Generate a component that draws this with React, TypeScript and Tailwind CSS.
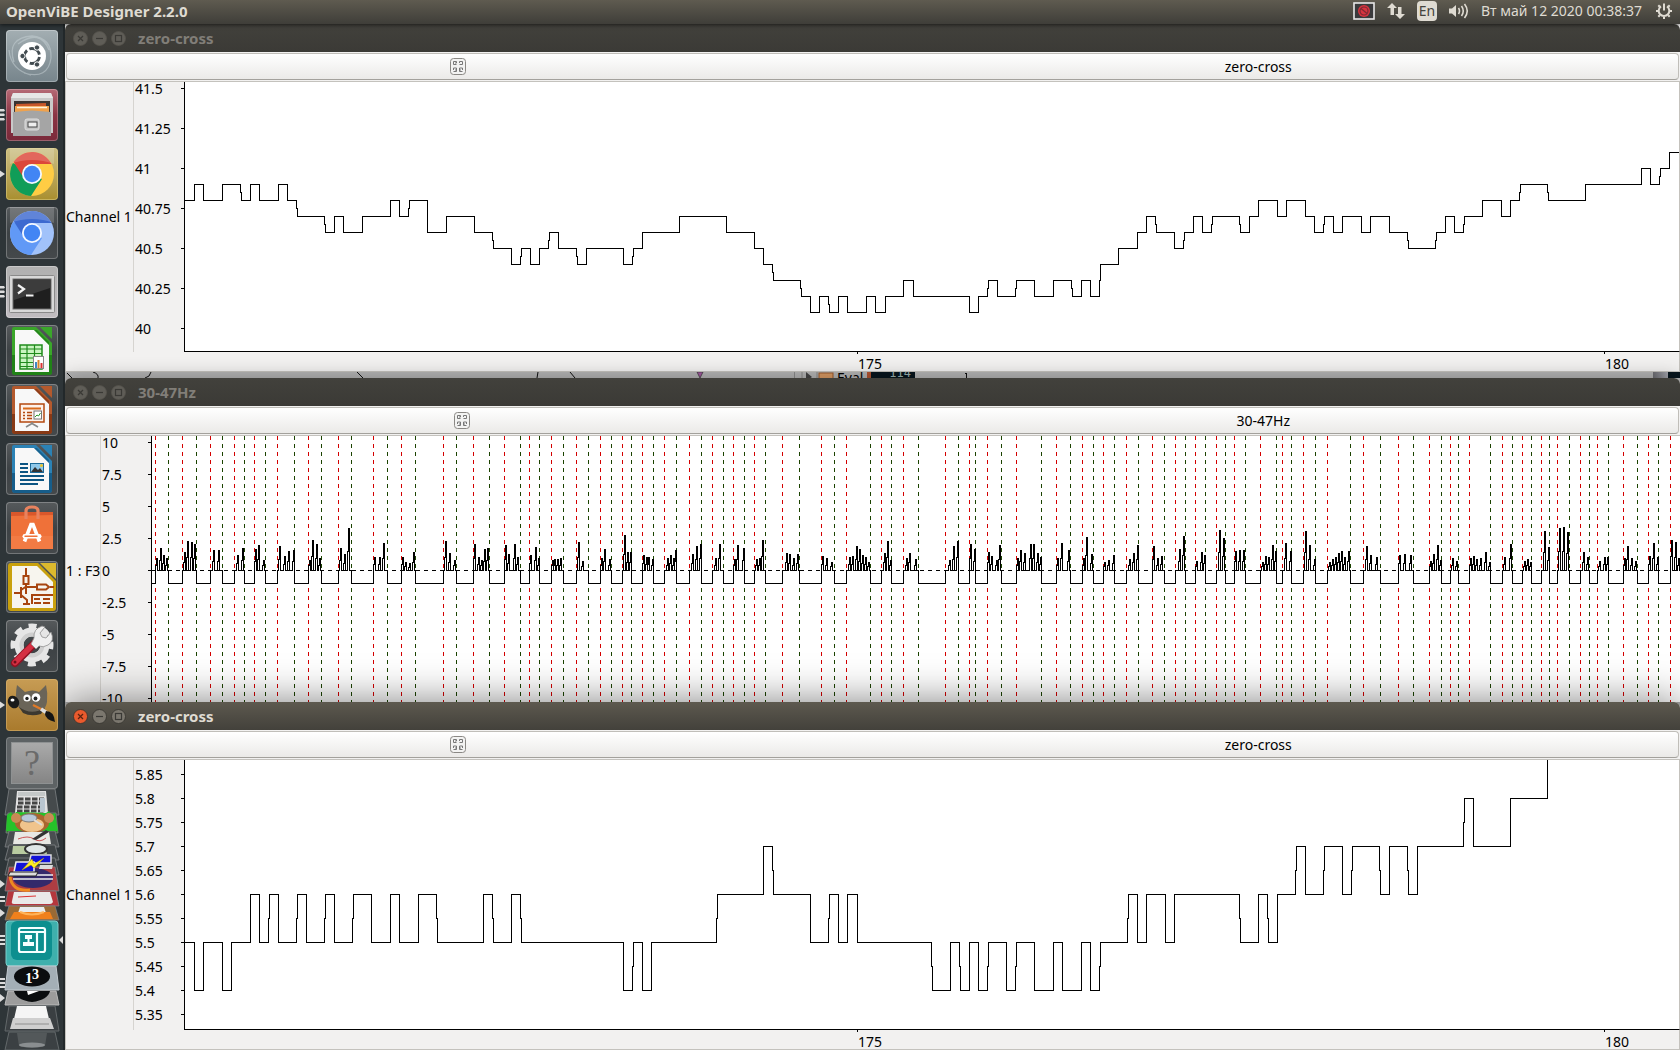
import React from "react";

type Step = [number, number];
type Burst = [number, number, number[]];

const EPOCH = 9.3375;

/* [epoch index, level in tenths] */
const UPPER: Step[] = [
  [0, 8], [1, 9], [2, 8], [4, 9], [6, 8], [7, 9], [8, 8], [10, 9], [11, 8], [12, 7], [15, 6], [16, 7], [17, 6], [19, 7],
  [22, 8], [23, 7], [24, 8], [26, 6], [28, 7], [31, 6], [33, 5], [35, 4], [36, 5], [37, 4], [38, 5], [39, 6], [40, 5],
  [42, 4], [43, 5], [47, 4], [48, 5], [49, 6], [53, 7], [58, 6], [61, 5], [62, 4], [63, 3], [66, 2], [67, 1], [68, 2],
  [69, 1], [70, 2], [71, 1], [73, 2], [74, 1], [75, 2], [77, 3], [78, 2], [84, 1], [85, 2], [86, 3], [87, 2], [89, 3],
  [91, 2], [93, 3], [95, 2], [96, 3], [97, 2], [98, 4], [100, 5], [102, 6], [103, 7], [104, 6], [106, 5], [107, 6],
  [108, 7], [109, 6], [110, 7], [113, 6], [114, 7], [115, 8], [117, 7], [118, 8], [120, 7], [121, 6], [122, 7],
  [123, 6], [124, 7], [126, 6], [127, 7], [129, 6], [131, 5], [134, 6], [135, 7], [136, 6], [137, 7], [139, 8],
  [141, 7], [142, 8], [143, 9], [146, 8], [150, 9], [156, 10], [157, 9], [158, 10], [159, 11], [160, 11],
];

const LOWER: Step[] = [
  [0, 5], [1, 4], [2, 5], [4, 4], [5, 5], [7, 6], [8, 5], [9, 6], [10, 5], [12, 6], [13, 5], [15, 6], [16, 5], [18, 6],
  [20, 5], [22, 6], [23, 5], [25, 6], [27, 5], [32, 6], [33, 5], [35, 6], [36, 5], [47, 4], [48, 5], [49, 4], [50, 5],
  [57, 6], [62, 7], [63, 6], [67, 5], [69, 6], [70, 5], [71, 6], [72, 5], [80, 4], [82, 5], [83, 4], [84, 5], [85, 4],
  [86, 5], [88, 4], [89, 5], [91, 4], [93, 5], [94, 4], [96, 5], [97, 4], [98, 5], [101, 6], [102, 5], [103, 6],
  [105, 5], [106, 6], [113, 5], [115, 6], [116, 5], [117, 6], [119, 7], [120, 6], [122, 7], [124, 6], [125, 7],
  [128, 6], [129, 7], [131, 6], [132, 7], [137, 8], [138, 7], [142, 8], [146, 10],
];

/* [gate on, gate off, (offset, height) pairs] */
const BURSTS: Burst[] = [
  [155, 168, [1, 12, 5, 22, 8, 15, 11, 12]],
  [182, 196, [2, 18, 5, 29, 9, 28, 12, 26]],
  [210, 222, [3, 20, 8, 20]],
  [234, 244, [3, 15, 8, 22]],
  [254, 265, [1, 21, 4, 25, 9, 10]],
  [277, 294, [2, 24, 7, 14, 11, 19, 16, 20]],
  [308, 321, [1, 10, 4, 30, 8, 26, 11, 12]],
  [338, 351, [2, 22, 6, 16, 10, 42]],
  [373, 387, [1, 13, 6, 13, 10, 27]],
  [401, 415, [1, 13, 4, 8, 8, 7, 12, 18]],
  [443, 456, [2, 29, 6, 17, 11, 10]],
  [473, 489, [1, 26, 5, 13, 8, 10, 11, 21, 14, 22]],
  [504, 520, [1, 25, 4, 16, 10, 26, 13, 13]],
  [529, 539, [1, 15, 6, 23, 9, 12]],
  [551, 563, [1, 10, 3, 11, 6, 11, 9, 12]],
  [576, 588, [2, 28, 6, 9]],
  [600, 611, [1, 12, 4, 21, 9, 11]],
  [622, 631, [2, 35, 5, 18, 8, 18]],
  [642, 653, [1, 15, 4, 13, 6, 13, 10, 11]],
  [664, 676, [3, 12, 6, 15, 9, 12, 11, 20]],
  [689, 701, [3, 16, 7, 24, 11, 26]],
  [712, 723, [3, 12, 7, 26]],
  [733, 744, [1, 11, 4, 25, 10, 22]],
  [754, 765, [2, 11, 5, 12, 8, 30]],
  [782, 799, [4, 17, 7, 16, 11, 12, 15, 16]],
  [821, 834, [1, 14, 5, 12, 10, 8]],
  [846, 870, [3, 13, 6, 14, 10, 24, 13, 21, 16, 15, 19, 13, 22, 8]],
  [881, 891, [3, 17, 6, 29, 9, 10]],
  [903, 918, [3, 12, 6, 17, 12, 11]],
  [945, 958, [4, 10, 8, 24, 12, 29]],
  [969, 975, [1, 26, 5, 21]],
  [987, 1001, [1, 18, 4, 14, 9, 10, 12, 25]],
  [1016, 1041, [1, 12, 4, 20, 8, 17, 14, 26, 17, 26, 21, 17, 24, 13]],
  [1056, 1070, [1, 12, 5, 27, 12, 20]],
  [1082, 1093, [1, 12, 4, 33, 9, 16]],
  [1103, 1114, [1, 8, 5, 10, 10, 15]],
  [1126, 1138, [3, 11, 7, 17, 11, 25]],
  [1152, 1164, [1, 24, 5, 12, 9, 14]],
  [1175, 1185, [4, 21, 8, 34]],
  [1195, 1205, [1, 9, 6, 18, 9, 15]],
  [1216, 1225, [3, 40, 7, 32]],
  [1234, 1245, [1, 19, 5, 20, 9, 20]],
  [1260, 1276, [2, 8, 5, 14, 8, 13, 12, 25, 15, 19]],
  [1282, 1291, [3, 27, 8, 19]],
  [1303, 1315, [2, 39, 6, 25, 11, 11]],
  [1327, 1350, [2, 8, 5, 11, 8, 13, 11, 17, 14, 19, 17, 13, 21, 19]],
  [1363, 1380, [3, 24, 7, 15, 13, 13]],
  [1398, 1413, [1, 15, 6, 16, 12, 15]],
  [1429, 1441, [1, 9, 4, 16, 8, 25, 11, 10]],
  [1450, 1458, [2, 12, 6, 9]],
  [1469, 1490, [1, 12, 4, 14, 7, 11, 11, 12, 16, 18, 20, 8]],
  [1502, 1512, [2, 13, 8, 26]],
  [1522, 1531, [2, 9, 5, 11, 8, 8]],
  [1541, 1549, [3, 39, 7, 23]],
  [1557, 1569, [2, 42, 6, 43, 10, 38]],
  [1580, 1589, [3, 18, 7, 13]],
  [1597, 1608, [2, 9, 7, 13, 10, 13]],
  [1623, 1637, [1, 12, 4, 24, 8, 12, 12, 9]],
  [1648, 1658, [1, 14, 5, 27, 9, 13]],
  [1670, 1684, [1, 30, 5, 28, 8, 12]],
];

/* Samples that straddle a pixel column draw their edge in two halves. */
function straddles(i: number) {
  return i < 72 ? i % 3 === 0 : i >= 80 && i % 3 === 2;
}

function stepPath(steps: Step[], yOf: (v: number) => number) {
  let d = `M0 ${yOf(steps[0][1])}`;
  let prev = steps[0][1];
  for (const [i, v] of steps.slice(1)) {
    const raw = i * EPOCH;
    if (straddles(i)) {
      const x = Math.round(raw) - 0.5;
      d += `H${x}V${(yOf(prev) + yOf(v)) / 2}H${x + 1}V${yOf(v)}`;
    } else {
      d += `H${Math.floor(raw) + 0.5}V${yOf(v)}`;
    }
    prev = v;
  }
  return d;
}

const ORIGIN = 152;
const ZERO = 134.5;

function burstPath() {
  let d = `M0 ${ZERO + 13}`;
  for (const [on, off, peaks] of BURSTS) {
    const x0 = on - ORIGIN + 0.5;
    d += `H${x0}V${ZERO}`;
    for (let k = 0; k < peaks.length; k += 2) {
      const x = x0 + peaks[k];
      const h = peaks[k + 1];
      d += `H${x - 1}V${ZERO - Math.round(h * 0.45)}H${x}V${ZERO - h}H${x + 1}V${ZERO}`;
    }
    d += `H${off - ORIGIN + 0.5}V${ZERO + 13}`;
  }
  return d;
}

function StepPlot({ steps, yOf, label }: { steps: Step[]; yOf: (v: number) => number; label: string }) {
  return (
    <svg role="img" aria-label={label} viewBox="0 0 1494 269" preserveAspectRatio="none" className="block h-full w-full" shapeRendering="crispEdges">
      <path d={stepPath(steps, yOf)} fill="none" stroke="#000" />
    </svg>
  );
}

function BurstPlot() {
  return (
    <svg role="img" aria-label="30-47Hz signal" viewBox="0 0 1528 266" preserveAspectRatio="none" className="block h-full w-full" shapeRendering="crispEdges">
      {BURSTS.map(([on, off]) => (
        <g key={on} strokeDasharray="4 4" fill="none">
          <path d={`M${on - ORIGIN + 0.5} 0V266`} stroke="#d40000" />
          <path d={`M${off - ORIGIN + 0.5} 0V266`} stroke="#1b4300" />
        </g>
      ))}
      <path d={`M0 ${ZERO}H1528`} stroke="#000" strokeDasharray="4 4" />
      <path d={burstPath()} fill="none" stroke="#000" />
    </svg>
  );
}

function WindowButton({ kind, active }: { kind: "close" | "min" | "max"; active?: boolean }) {
  const hot = active && kind === "close";
  const fill = hot ? "#ea5a2d" : active ? "#7b776e" : "#5f5d57";
  const mark = hot ? "#5b2310" : "#3a3935";
  return (
    <button type="button" aria-label={kind} className="h-[15px] w-[15px] shrink-0">
      <svg viewBox="0 0 15 15" className="block h-full w-full">
        <circle cx="7.5" cy="7.5" r="7" fill={fill} stroke={active ? "#35332f" : "#55534d"} strokeWidth=".8" />
        {kind === "close" && <path d="M5 5l5 5M10 5l-5 5" stroke={mark} strokeWidth="1.2" />}
        {kind === "min" && <path d="M4 7.5h7" stroke={mark} strokeWidth="1.2" />}
        {kind === "max" && <rect x="4.5" y="4.5" width="6" height="6" fill="none" stroke={mark} strokeWidth="1.2" />}
      </svg>
    </button>
  );
}

function TitleBar({ title, active }: { title: string; active?: boolean }) {
  return (
    <header
      className={
        active
          ? "flex h-7 items-center gap-1 rounded-t-md bg-gradient-to-b from-[#5d594f] to-[#43413b] pl-2 text-[#dfdbd2]"
          : "flex h-7 items-center gap-1 rounded-t-md bg-gradient-to-b from-[#42413c] to-[#3b3a36] pl-2 text-[#817e78]"
      }
    >
      <WindowButton kind="close" active={active} />
      <WindowButton kind="min" active={active} />
      <WindowButton kind="max" active={active} />
      <h2 className="pl-2 text-[15px] leading-5 font-bold">{title}</h2>
    </header>
  );
}

function Toolbar({ title, wide }: { title: string; wide?: boolean }) {
  return (
    <div className="h-[30px] border-b border-[#c4c2bd] bg-[#f2f1f0] px-px pt-px">
      <button
        type="button"
        className={
          wide
            ? "grid h-[27px] w-full grid-cols-[790fr_814fr_8fr] items-center rounded border border-[#c0beb9] border-b-[#a3a19c] bg-gradient-to-b from-white to-[#ebeae8] text-sm leading-5"
            : "grid h-[27px] w-full grid-cols-[782fr_820fr_10fr] items-center rounded border border-[#c0beb9] border-b-[#a3a19c] bg-gradient-to-b from-white to-[#ebeae8] text-sm leading-5"
        }
      >
        <svg viewBox="0 0 16 17" className="mx-auto h-[17px] w-4" fill="none">
          <rect x=".5" y=".5" width="15" height="16" rx="3" fill="#f3f3f2" stroke="#8a8884" />
          <path d="M6.500 6.500h-3v-3h3v1.500H5M9.500 5V3.500h3v3h-3M3.500 12V10h3v3.500h-3M5 12h1.500M12.500 12v-2h-3v3.500h3M11 12H9.500" stroke="#777" strokeWidth="1" />
        </svg>
        <span>{title}</span>
      </button>
    </div>
  );
}

function ScaleRow({ label, row }: { label: string; row: string }) {
  return (
    <li className={row}>
      <span className="pt-0.5 leading-4">{label}</span>
      <span className="h-px w-[3px] bg-black" />
    </li>
  );
}

function TimeAxis() {
  return (
    <div className="grid h-5 grid-cols-[672fr_747fr_75fr] border-r border-b border-l border-[#c4c2bd] pl-[119px] text-sm leading-5">
      <span />
      {["175", "180"].map((t) => (
        <div key={t} className="flex">
          <span className="h-0.5 w-px bg-black" />
          <span className="pt-0.5 leading-5">{t}</span>
        </div>
      ))}
    </div>
  );
}

function ZeroCrossWindow({
  active,
  labels,
  rowClass,
  listClass,
  steps,
  yOf,
}: {
  active?: boolean;
  labels: string[];
  rowClass: string;
  listClass: string;
  steps: Step[];
  yOf: (v: number) => number;
}) {
  return (
    <section
      className={
        active
          ? "relative z-20 rounded-t-md bg-[#f2f1f0] shadow-[0_0_40px_rgba(0,0,0,0.5)]"
          : "relative bg-[#f2f1f0]"
      }
    >
      <TitleBar title="zero-cross" active={active} />
      <Toolbar title="zero-cross" />
      <div className="flex h-[270px] border-l border-[#c4c2bd] text-sm leading-5">
        <div className="flex w-[68px] shrink-0 items-center border-r border-[#d6d4d0] whitespace-nowrap">Channel 1</div>
        <ol className={listClass}>
          {labels.map((l) => (
            <ScaleRow key={l} label={l} row={rowClass} />
          ))}
        </ol>
        <div className="min-w-0 flex-1 border-r border-b border-l border-r-[#c4c2bd] border-b-black border-l-black bg-white">
          <StepPlot steps={steps} yOf={yOf} label="Channel 1 signal" />
        </div>
      </div>
      <TimeAxis />
    </section>
  );
}

function BandWindow() {
  return (
    <section className="relative z-10 rounded-t-md bg-[#f2f1f0] shadow-[0_0_20px_rgba(0,0,0,0.3)]">
      <TitleBar title="30-47Hz" />
      <Toolbar title="30-47Hz" wide />
      <div className="flex h-[266px] overflow-hidden border-l border-[#c4c2bd] text-sm leading-5">
        <div className="flex w-[35px] shrink-0 items-center border-r border-[#d6d4d0] pt-1 whitespace-nowrap">1 : F3</div>
        <ol className="-mt-[10px] w-[50px] shrink-0 pl-px">
          {["10", "7.5", "5", "2.5", "0", "-2.5", "-5", "-7.5", "-10"].map((l) => (
            <ScaleRow key={l} label={l} row="flex h-8 items-center justify-between" />
          ))}
        </ol>
        <div className="min-w-0 flex-1 border-l border-black bg-white">
          <BurstPlot />
        </div>
      </div>
    </section>
  );
}

/* The sliver of the designer window that shows between the two upper windows. */
function DesignerSliver() {
  return (
    <div className="flex h-1.5 overflow-hidden bg-[#b5b5b5] text-sm leading-3">
      <svg viewBox="0 0 729 6" className="h-1.5 w-[729px] shrink-0" fill="none" stroke="#111">
        <path d="M2 1l5 5M28 0q6 2 5 6M80 6q5-1 6-6M292 0l6 6M472 6l1-6M505 0l5 6" />
        <path d="M632 0h6l-3 6z" fill="#a259a0" stroke="#333" strokeWidth=".7" />
      </svg>
      <div className="flex w-[140px] shrink-0 overflow-hidden border-l border-[#8b8b8b]">
        <svg viewBox="0 0 36 6" className="ml-1.5 h-1.5 w-9 shrink-0">
          <path d="M1 0v6M16 0v6" stroke="#888" />
          <path d="M5 0l6 5-6 4z" fill="#444" />
          <rect x="18" y="1" width="14" height="8" fill="#d99a63" stroke="#9b5a2c" />
        </svg>
        <span className="w-[30px] shrink-0">Eval</span>
        <span className="flex h-4 w-[48px] shrink-0 justify-end border-l-4 border-[#b2532f] bg-[#07151d] pr-1 font-['DejaVu_Sans_Mono',monospace] text-xs leading-[2px] text-[#9bb0ae]">114</span>
      </div>
      <svg viewBox="0 0 60 6" className="h-1.5 w-[60px] shrink-0">
        <path d="M32.500 1v5M31 1.500h1.500" stroke="#111" />
      </svg>
      <span className="flex-1" />
      <span className="w-[15px] bg-gradient-to-r from-[#6d6d72] to-[#a4a5ad]" />
      <span className="w-3 bg-[#07151d]" />
    </div>
  );
}

type Mark = "bars" | "arrow" | undefined;

function Marker({ mark }: { mark: Mark }) {
  return (
    <svg viewBox="0 0 6 16" className="h-4 w-1.5 shrink-0" fill="#dcdcdc">
      {mark === "bars" && <path d="M0 2h4l1 1.500-1 1H0zM0 6.500h4l1 1.500-1 1H0zM0 11h4l1 1.500-1 1H0z" />}
      {mark === "arrow" && <path d="M0 4.500l5 3.500-5 3.500z" />}
    </svg>
  );
}

function Tile({ name, mark, bg, children }: { name: string; mark?: Mark; bg: string; children: React.ReactNode }) {
  return (
    <li className="flex items-center">
      <Marker mark={mark} />
      <button type="button" aria-label={name} className={bg}>
        <svg viewBox="0 0 52 52" className="block h-full w-full">
          {children}
        </svg>
      </button>
    </li>
  );
}

const TILE_SLATE = "h-[52px] w-[52px] overflow-hidden rounded bg-gradient-to-b from-[#565a5c] via-[#3d4245] to-[#45494b] ring-1 ring-white/25 ring-inset";

function OfficePage({ edge, dark, children }: { edge: string; dark: string; children: React.ReactNode }) {
  return (
    <g>
      <path d="M8 2h22l16 16v29a3 3 0 0 1-3 3H9a3 3 0 0 1-3-3V4a2 2 0 0 1 2-2z" fill={edge} />
      <path d="M6 30h40v17a3 3 0 0 1-3 3H9a3 3 0 0 1-3-3z" fill={dark} opacity=".6" />
      <path d="M9 5h19l15 15v27H9z" fill="#f8f8f8" />
      <path d="M28 5l15 15V17L31 5z" fill={dark} opacity=".5" />
      <path d="M34 2h12v12z" fill={edge} />
      {children}
    </g>
  );
}

function Launcher() {
  return (
    <nav aria-label="Launcher" className="w-[65px] shrink-0 overflow-hidden border-r-2 border-[#22282a] bg-[#2e3538] pt-1.5">
      <ul className="flex flex-col gap-[7px]">
        <Tile name="Dash" bg="h-[52px] w-[52px] overflow-hidden rounded bg-gradient-to-b from-[#a3aeb2] to-[#77858c] ring-1 ring-white/30 ring-inset">
          <g fill="none" stroke="#c3cdd1" strokeOpacity=".55" strokeWidth="1.300">
            <path d="M8 32Q0 8 26 6q20 2 19 22M12 14Q34-2 43 20M45 28Q42 50 18 43M3 20q2 20 22 25" />
          </g>
          <circle cx="26" cy="26" r="14" fill="#fff" />
          <circle cx="26" cy="26" r="7.500" fill="none" stroke="#424b50" strokeWidth="2.800" strokeDasharray="13 2.700" strokeDashoffset="-1" />
          <g fill="#424b50" stroke="#fff" strokeWidth="1">
            <circle cx="16.500" cy="26" r="2.700" />
            <circle cx="31" cy="17.500" r="2.700" />
            <circle cx="31" cy="34.500" r="2.700" />
          </g>
        </Tile>
        <Tile name="Files" mark="bars" bg="h-[52px] w-[52px] overflow-hidden rounded bg-gradient-to-b from-[#b56a76] via-[#8b3444] to-[#7a2a3a] ring-1 ring-white/25 ring-inset">
          <path d="M7 4h38l2 5v35H5V9z" fill="#c9c9c9" />
          <path d="M7 4h38l2 5H5z" fill="#e6e6e6" />
          <path d="M8 12h36v11H8z" fill="#3a3431" />
          <path d="M10 15l30-1v8H10z" fill="#c8572a" />
          <path d="M9 17h34v7H9z" fill="#f0a24d" />
          <path d="M11 18.500h30" stroke="#fff2dc" strokeWidth="1.400" />
          <path d="M7 23l19-1.500L45 23v24H7z" fill="#a5a5a5" />
          <rect x="19" y="30" width="14" height="11" rx="2" fill="#c4c4c4" stroke="#dedede" />
          <rect x="22" y="33" width="9" height="5" fill="#eee" stroke="#444" />
        </Tile>
        <Tile name="Google Chrome" mark="arrow" bg="h-[52px] w-[52px] overflow-hidden rounded bg-gradient-to-b from-[#cbbf84] to-[#a98f2e] ring-1 ring-[#e2d28a]/50 ring-inset">
          <circle cx="26" cy="26" r="22" fill="#fc4" />
          <path d="M26 26L7 15A22 22 0 0 0 25 48l11-17z" fill="#109d58" />
          <path d="M7.500 14A22 22 0 0 1 45.500 16H26a10 10 0 0 0-9.500 12z" fill="#dc4639" />
          <circle cx="26" cy="26" r="10" fill="#f4f8ff" />
          <circle cx="26" cy="26" r="8.200" fill="#4285f4" />
          <path d="M4 0h44v16Q26 8 4 16z" fill="#fff" opacity=".18" />
        </Tile>
        <Tile name="Chromium" bg={TILE_SLATE}>
          <circle cx="26" cy="26" r="22" fill="#a1c2fa" />
          <path d="M26 26L7 15A22 22 0 0 0 25 48l11-17z" fill="#6199f6" />
          <path d="M7.500 14A22 22 0 0 1 45.500 16H26a10 10 0 0 0-9.500 12z" fill="#3d6ad0" />
          <circle cx="26" cy="26" r="10" fill="#f4f8ff" />
          <circle cx="26" cy="26" r="8.200" fill="#4285f4" />
          <path d="M4 0h44v16Q26 8 4 16z" fill="#fff" opacity=".18" />
        </Tile>
        <Tile name="Terminal" mark="bars" bg="h-[52px] w-[52px] overflow-hidden rounded bg-gradient-to-b from-[#b0b0b0] to-[#c0bcc0] ring-1 ring-white/30 ring-inset">
          <rect x="3.500" y="9.500" width="45" height="37" rx="1" fill="#d8d8d8" stroke="#8a8a8a" />
          <rect x="7" y="13" width="38" height="30" fill="#1f1f1f" stroke="#6c6c6c" />
          <path d="M8 14h36v8L8 34z" fill="#fff" opacity=".13" />
          <path d="M12 19l6 4-6 4.500" fill="none" stroke="#f2f2f2" strokeWidth="2.200" />
          <path d="M20 29.500h7.500" stroke="#f2f2f2" strokeWidth="2.200" />
        </Tile>
        <Tile name="LibreOffice Calc" bg={TILE_SLATE}>
          <OfficePage edge="#3aa62a" dark="#0f6a0c">
            <path d="M14 20h22v24H14z" fill="#c9f5c0" stroke="#1f8a1b" strokeWidth="1.500" />
            <path d="M14 24h22M14 28.500h22M14 33h22M14 37.500h22M14 41.500h22M21 20v24M28.500 20v24" stroke="#1f8a1b" strokeWidth="1.200" />
            <rect x="27.500" y="31.500" width="10" height="12" fill="#fff" stroke="#888" />
            <path d="M30 43v-6" stroke="#3f88c5" strokeWidth="2" />
            <path d="M32.500 43v-8" stroke="#d9822b" strokeWidth="2" />
            <path d="M35.500 43v-5" stroke="#d33" strokeWidth="2" />
          </OfficePage>
        </Tile>
        <Tile name="LibreOffice Impress" bg={TILE_SLATE}>
          <OfficePage edge="#b4592d" dark="#6b2405">
            <rect x="14" y="20" width="24" height="18" fill="#fdf1ea" stroke="#b4480f" strokeWidth="1.500" />
            <path d="M17 24.500h18" stroke="#d86a1c" strokeWidth="2" />
            <path d="M17 28.500h2M17 31.500h2M17 34.500h2M21 28.500h5M21 31.500h5M21 34.500h5" stroke="#b4480f" strokeWidth="1.600" />
            <rect x="28" y="27" width="7.500" height="8" fill="#fff" stroke="#777" />
            <path d="M29 33l2-2 1.500 1 2-3" fill="none" stroke="#2a9a2a" />
            <path d="M26 38v2M20 43l6-3.500 6 3.500" fill="none" stroke="#888" strokeWidth="1.600" />
          </OfficePage>
        </Tile>
        <Tile name="LibreOffice Writer" bg={TILE_SLATE}>
          <OfficePage edge="#2b82b5" dark="#08456e">
            <path d="M14 21h8M14 25h8M14 29h8M14 33h24M14 37h24M14 41h18" stroke="#0c5583" strokeWidth="1.800" />
            <rect x="24.500" y="20.500" width="13" height="9" fill="#8fc8ea" stroke="#1c6a99" />
            <path d="M25 29l4-5 3 3 2-2 3 4z" fill="#333" />
            <circle cx="35.500" cy="22.500" r="1.500" fill="#e9c530" />
          </OfficePage>
        </Tile>
        <Tile name="Ubuntu Software" bg={TILE_SLATE}>
          <path d="M5 10h42v6H5z" fill="#d9572b" />
          <path d="M5 14l42-1v34H5z" fill="#ef7139" />
          <path d="M5 34h42v13H5z" fill="#f6854f" opacity=".5" />
          <path d="M20 17V9q0-4 6-4t6 4v8" fill="none" stroke="#e8825e" strokeWidth="3.200" />
          <path d="M18.500 39.500L25 22.500h2l6.500 17" fill="none" stroke="#fff" strokeWidth="3.600" />
          <rect x="16.500" y="32" width="19" height="4.600" rx="2.300" fill="#fff" />
          <path d="M19 34.300h12" stroke="#ef7139" strokeWidth="1.400" strokeLinecap="round" />
        </Tile>
        <Tile name="Circuit diagrams" bg={TILE_SLATE}>
          <path d="M2 5a3 3 0 0 1 3-3h27l18 18v27a3 3 0 0 1-3 3H5a3 3 0 0 1-3-3z" fill="#c9a10d" />
          <path d="M6 5h25l16 16v26H6z" fill="#f7f5ee" />
          <path d="M34 2h16v16z" fill="#dcb92e" />
          <g fill="none" stroke="#a8450f" strokeWidth="2">
            <path d="M20 7v8M20 23v10M8 32h7M15 26v11M15 29l6-4M15 34l6 5v4M17 43h7M20 26h11M44 26h4" />
            <rect x="17.500" y="15" width="5" height="8" />
            <path d="M31 23.500h9l3 2.500-3 2.500h-9z" />
            <path d="M26 43v-9h21M28 38h6M37 38h7M28 42h7M37 42h7" />
          </g>
        </Tile>
        <Tile name="System Settings" bg={TILE_SLATE}>
          <circle cx="26" cy="25" r="19" fill="none" stroke="#e6e6e6" strokeWidth="5" strokeDasharray="8 6.920" strokeDashoffset="4" />
          <circle cx="26" cy="25" r="13" fill="none" stroke="#e6e6e6" strokeWidth="9" />
          <circle cx="26" cy="25" r="10.500" fill="none" stroke="#cfcfcf" strokeWidth="4" />
          <path d="M9 43L30 22" stroke="#8e1222" strokeWidth="8" strokeLinecap="round" />
          <path d="M9 42.500L30 21.500" stroke="#d52f42" strokeWidth="5.500" strokeLinecap="round" />
          <path d="M28 18q-1-9 8-12l3 1-5 6 2 4 4 1 5-6q4 9-3 13-5 3-9 1l-3 3-5-5z" fill="#efefef" stroke="#8f8f8f" strokeWidth=".8" />
          <circle cx="9" cy="42" r="1.500" fill="#6d0e1a" />
        </Tile>
        <Tile name="GIMP" mark="arrow" bg="h-[52px] w-[52px] overflow-hidden rounded bg-gradient-to-b from-[#c79c54] to-[#a97a2c] ring-1 ring-[#dcb877]/50 ring-inset">
          <path d="M11 6l8 7q8-3 14 0l7-7q2 8 1 17-2 11-14 11-13 0-16-9-2-9 0-19z" fill="#6a6458" />
          <path d="M13 28q12 9 26 1l-4 6q-10 3-18-1z" fill="#3c3830" />
          <circle cx="21" cy="19" r="3.600" fill="#fff" />
          <circle cx="30" cy="18.500" r="4.300" fill="#fff" />
          <circle cx="21" cy="19.500" r="1.700" fill="#222" />
          <circle cx="29.500" cy="19.500" r="1.900" fill="#222" />
          <ellipse cx="7.500" cy="23" rx="5.500" ry="6.500" fill="#1a1a1a" transform="rotate(-25 7.500 23)" />
          <ellipse cx="6.500" cy="21" rx="2" ry="1.600" fill="#fff" />
          <path d="M27 26l14 7" stroke="#e07a28" strokeWidth="2.500" />
          <path d="M35 30l6 4" stroke="#ddd" strokeWidth="3.500" />
          <path d="M40 32q8 0 9 11-10-3-10-8z" fill="#151515" />
        </Tile>
        <li className="-mt-px flex items-center">
          <Marker mark={undefined} />
          <button type="button" aria-label="Unknown application" className="h-[52px] w-[52px] rounded bg-[#5d6264] p-1.5 ring-1 ring-white/20 ring-inset">
            <span className="flex h-full items-center justify-center bg-gradient-to-b from-[#aaaaaa] to-[#858585] font-['Liberation_Serif',serif] text-4xl text-[#6a6a6a] ring-1 ring-white/30">?</span>
          </button>
        </li>
      </ul>
      <FoldedIcons />
    </nav>
  );
}

function FoldedIcons() {
  return (
    <svg role="img" aria-label="Folded launcher items" viewBox="0 0 63 261" className="block h-[261px] w-[63px]">
      <g stroke="#7d8284" strokeWidth=".8">
        <path d="M9 0h46l4 26H5z" fill="#454a4c" />
        <path d="M8 24h48l2 20H6z" fill="#2f7d2c" />
        <path d="M9 42h46l4 16H5z" fill="#4a4f51" />
        <path d="M9 56h46l4 15H5z" fill="#3e4345" />
        <path d="M9 69h46l4 17H5z" fill="#3e4345" />
        <path d="M9 78h46l4 24H5z" fill="#ae3d42" />
        <path d="M8 102h48l3 15H5z" fill="#b5373d" />
        <path d="M9 117h46l4 14H5z" fill="#9a6a35" />
      </g>
      <path d="M17 2h29l2 22H15z" fill="#e1e1e1" />
      <path d="M18 3h27v4H18z" fill="#c4c8c8" />
      <path d="M18 10h26M18 14h26M17 18h28M17 22h28" stroke="#454545" strokeWidth="2.800" strokeDasharray="5.500 1.500" />
      <path d="M40 9h5v14h-5z" fill="#b9c6d0" />
      <path d="M7 26l4-3 2 4 3-4 30 1 3-2 2 4 4-2 3 18H6z" fill="#25c22a" />
      <ellipse cx="32" cy="34" rx="17" ry="10" fill="#a9662f" />
      <circle cx="16" cy="29" r="5" fill="#c98a55" />
      <circle cx="49" cy="29" r="5" fill="#c98a55" />
      <ellipse cx="32" cy="36" rx="12" ry="7" fill="#f0c48c" />
      <ellipse cx="29" cy="29" rx="8" ry="4" fill="#b7c7d8" stroke="#7b7b7b" />
      <path d="M34 31l8 5" stroke="#ddd" strokeWidth="2" />
      <path d="M15 43h34l2 12H13z" fill="#e8e8e4" />
      <path d="M18 50q10-4 16 0t12-1" fill="none" stroke="#c55" />
      <path d="M32 50l14-9 3 2-13 8z" fill="#333" />
      <path d="M13 57h32l2 8H12z" fill="#b9cba0" />
      <ellipse cx="36" cy="60" rx="11" ry="5" fill="#dfe6e6" stroke="#333" strokeWidth="2" />
      <path d="M31 66h20v8H29z" fill="#1212d8" stroke="#ddd" strokeWidth="1.500" />
      <path d="M10 86q1 17 20 15" fill="none" stroke="#ef8a1f" strokeWidth="3" />
      <ellipse cx="33" cy="89" rx="20" ry="10" fill="#33296b" />
      <path d="M13 86h40M13 90h40" stroke="#eee" strokeWidth="1.600" />
      <path d="M16 73h18v10H14z" fill="#1212d8" stroke="#eee" strokeWidth="1.500" />
      <path d="M10 83h28l-2 4H8z" fill="#dcdcdc" stroke="#222" />
      <path d="M40 76h13l-1 4H39z" fill="#dcdcdc" />
      <path d="M22 81l10-11 2 5 10-6-10 10-3-3z" fill="#ffee22" stroke="#b89a00" strokeWidth=".5" />
      <path d="M14 103h36l3 10q-1 2-3 2H14q-3 0-2-3z" fill="#e9e9e9" />
      <path d="M18 108l18-1" stroke="#d33" />
      <path d="M20 118h24l2 6H18z" fill="#e8ebee" />
      <path d="M14 123h36l3 7H10z" fill="#f0801c" />
      <path d="M20 123q12 5 24 0" fill="none" stroke="#ffb35a" strokeWidth="2" />
      <rect x="6" y="132" width="52" height="45" rx="3" fill="#3fb0ad" stroke="#7ccfcc" />
      <rect x="11" y="132" width="41" height="39" rx="6" fill="#0d8f8f" />
      <g fill="none" stroke="#f4ffff" strokeWidth="2.200">
        <rect x="19" y="139" width="26" height="24" rx="2" />
        <path d="M19 143h26M37 143v20" />
      </g>
      <path d="M25 146h7v4h-2.500v3H34v4H23v-4h4.500v-3H25z" fill="#f4ffff" />
      <path d="M8 177h48l3 24H5z" fill="#a4afb6" stroke="#c2cad0" />
      <path d="M8 202h48l3 14H5z" fill="#9c9c9c" stroke="#bbb" />
      <path d="M14 202h36q-2 9-18 11-16-2-18-11z" fill="#0b0d0f" />
      <path d="M27 202h12l-11 4z" fill="#fff" />
      <ellipse cx="32" cy="187.500" rx="18" ry="10" fill="#0b0d0f" />
      <text x="25" y="194" fill="#fff" fontFamily="Liberation Serif, serif" fontWeight="bold" fontSize="15">1</text>
      <text x="32" y="190" fill="#fff" fontFamily="Liberation Serif, serif" fontWeight="bold" fontSize="14">3</text>
      <g stroke="#63686a">
        <path d="M9 217h46l4 25H5z" fill="#3a3f42" />
        <path d="M9 243h46l4 18H5z" fill="#3b4043" />
      </g>
      <path d="M17 217h29l3 13H14z" fill="#f5f5f5" />
      <path d="M13 229h37l4 11H10z" fill="#cfcfcf" />
      <path d="M15 235h34" stroke="#8f8f8f" />
      <path d="M17 244h30l-2 13q-13 4-26 0z" fill="#53585a" />
      <ellipse cx="32" cy="256" rx="13" ry="2.500" fill="#8a8e90" />
      <g fill="#dcdcdc">
        <path d="M0 91l5 4-5 4zM0 120l5 4-5 4zM0 205l5 4-5 4zM63 147v8l-4-4z" />
        <path d="M0 107h5v2H0zM0 111h5v2H0zM0 146h5v2H0zM0 150h5v2H0zM0 154h5v2H0zM0 189h5v2H0zM0 193h5v2H0zM0 197h5v2H0z" />
      </g>
    </svg>
  );
}

function TopPanel() {
  return (
    <header className="relative z-30 flex h-6 items-center justify-between bg-gradient-to-b from-[#5f5b50] to-[#3f3e39] pr-2 pb-0.5 pl-1.5 text-sm leading-5 text-[#dfdbd2] shadow-[0_1px_4px_rgba(0,0,0,0.6)]">
      <h1 className="text-[15px] leading-5 font-bold">OpenViBE Designer 2.2.0</h1>
      <div className="flex items-center">
        <button type="button" aria-label="Screen recorder" className="mr-3">
          <svg viewBox="0 0 22 18" className="block h-[18px] w-[22px]">
            <rect x="1" y="1" width="20" height="16" fill="#3a3a3c" stroke="#e8e8e8" strokeWidth="1.600" />
            <circle cx="11" cy="9" r="6" fill="#d8333f" />
            <circle cx="11" cy="9" r="4" fill="none" stroke="#7c2a33" strokeWidth="1.200" />
            <path d="M8 6.500l6 5" stroke="#7c2a33" strokeWidth="1.200" />
          </svg>
        </button>
        <button type="button" aria-label="Network" className="mr-3">
          <svg viewBox="0 0 18 18" className="block h-[18px] w-[18px]" fill="#dfdbd2">
            <path d="M5 1l5 5H7v7H3.500V6H0zM13 17l-5-5h3V5h3.500v7H18z" />
          </svg>
        </button>
        <button type="button" aria-label="Keyboard layout" className="mr-3 h-5 w-5 rounded-sm bg-[#dfdbd2] text-sm leading-5 text-[#45433d]">En</button>
        <button type="button" aria-label="Sound" className="mr-3">
          <svg viewBox="0 0 20 18" className="block h-[18px] w-5" fill="none" stroke="#dfdbd2" strokeWidth="1.600">
            <path d="M0 6.500h3l4-3.500v12l-4-3.500H0z" fill="#dfdbd2" stroke="none" />
            <path d="M9.500 6q2 3 0 6M12.500 4q3.500 5 0 10M15.500 2q5.500 7 0 14" />
          </svg>
        </button>
        <time dateTime="2020-05-12T00:38:37" className="mr-3.5">Вт май 12 2020 00:38:37</time>
        <button type="button" aria-label="Session">
          <svg viewBox="0 0 16 16" className="block h-4 w-4" fill="none" stroke="#dfdbd2">
            <path d="M5 3.400a5.300 5.300 0 1 0 6 0" strokeWidth="2" />
            <path d="M8 .5v7" strokeWidth="2" />
            <path d="M0 8h2M14 8h2M8 14v2M2.300 2.300l1.500 1.500M13.700 2.300l-1.500 1.500M2.300 13.700l1.500-1.500M13.700 13.700l-1.500-1.500" strokeWidth="2" />
          </svg>
        </button>
      </div>
    </header>
  );
}

export default function App() {
  return (
    <div className="flex min-h-screen flex-col bg-[#2e3538] font-['Noto_Sans','Open_Sans',sans-serif] text-black">
      <TopPanel />
      <div className="flex flex-1">
        <Launcher />
        <main className="min-w-0 flex-1 overflow-hidden bg-[#b5b5b5]">
          <ZeroCrossWindow
            labels={["41.5", "41.25", "41", "40.75", "40.5", "40.25", "40"]}
            listClass="-mt-[14px] w-[50px] shrink-0 pl-px"
            rowClass="flex h-10 items-center justify-between"
            steps={UPPER}
            yOf={(v) => 118.5 + (8 - v) * 16}
          />
          <DesignerSliver />
          <BandWindow />
          <ZeroCrossWindow
            active
            labels={["5.85", "5.8", "5.75", "5.7", "5.65", "5.6", "5.55", "5.5", "5.45", "5.4", "5.35"]}
            listClass="mt-0.5 w-[50px] shrink-0 pl-px"
            rowClass="flex h-6 items-center justify-between"
            steps={LOWER}
            yOf={(v) => 182.5 + (5 - v) * 48}
          />
        </main>
      </div>
    </div>
  );
}
